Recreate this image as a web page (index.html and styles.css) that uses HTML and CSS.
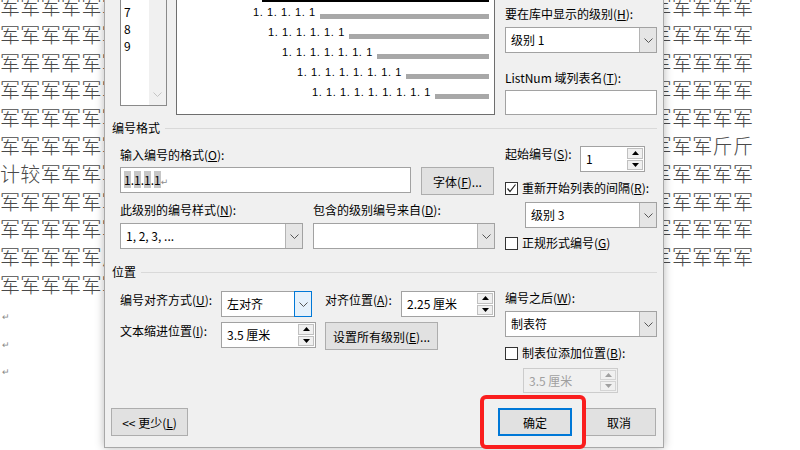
FILE: index.html
```html
<!DOCTYPE html>
<html lang="zh-CN">
<head>
    <meta charset="UTF-8">
    <title>定义新多级列表</title>
    <link rel="stylesheet" href="styles.css">
</head>
<body>
<div class="page">

    <div class="doc">
        <p>军军军军军军军军军军军军军军军军军军军军军军军军军军军军军军军军军军军军军</p>
        <p>军军军军军军军军军军军军军军军军军军军军军军军军军军军军军军军军军军军军军</p>
        <p>军军军军军军军军军军军军军军军军军军军军军军军军军军军军军军军军军军军军军</p>
        <p>军军军军军军军军军军军军军军军军军军军军军军军军军军军军军军军军军军军军军</p>
        <p>军军军军军军军军军军军军军军军军军军军军军军军军军军军军军军军军军军军军军</p>
        <p>军军军军军军军军军军军军军军军军军军军军军军军军军军军军军军军军军军军斤斤</p>
        <p>计较军军军军军军军军军军军军军军军军军军军军军军军军军军军军军军军军军军军</p>
        <p>军军军军军军军军军军军军军军军军军军军军军军军军军军军军军军军军军军军军军</p>
        <p>军军军军军军军军军军军军军军军军军军军军军军军军军军军军军军军军军军军军军</p>
        <p>军军军军军斤军军军军军军军军军军军军军军军军军军军军军军军军军军军军军军军</p>
        <p>军军军军军军军军军军军军军军军军军军军军军军军军军军军军军军军军</p>
        <p class="mark">↵</p>
        <p class="mark">↵</p>
        <p class="mark">↵</p>
    </div>

    <div class="dialog">
        <div class="top">
            <div class="levels">
                <div class="level-items">
                    <div>7</div>
                    <div>8</div>
                    <div>9</div>
                </div>
                <div class="scroll">
                    <svg width="9" height="5" viewBox="0 0 9 5"><polyline points="0.5,0.5 4.5,4.5 8.5,0.5" fill="none" stroke="#c4c4c4"/></svg>
                </div>
            </div>
            <div class="preview">
                <div class="sel-bar"></div>
                <div class="pv-row l5"><span>1. 1. 1. 1. 1</span><i></i></div>
                <div class="pv-row l6"><span>1. 1. 1. 1. 1. 1</span><i></i></div>
                <div class="pv-row l7"><span>1. 1. 1. 1. 1. 1. 1</span><i></i></div>
                <div class="pv-row l8"><span>1. 1. 1. 1. 1. 1. 1. 1</span><i></i></div>
                <div class="pv-row l9"><span>1. 1. 1. 1. 1. 1. 1. 1. 1</span><i></i></div>
            </div>
            <div class="side">
                <div class="lbl">要在库中显示的级别(<u>H</u>):</div>
                <div class="combo side-combo">
                    <span class="val">级别 1</span>
                    <b class="drop"><svg width="9" height="5" viewBox="0 0 9 5"><polyline points="0.5,0.5 4.5,4.5 8.5,0.5" fill="none" stroke="#555"/></svg></b>
                </div>
                <div class="lbl listnum">ListNum 域列表名(<u>T</u>):</div>
                <div class="field listnum-field"></div>
            </div>
        </div>

        <div class="group-title"><span>编号格式</span><i></i></div>

        <div class="fmt">
            <div class="fmt-left">
                <div class="lbl first">输入编号的格式(<u>O</u>):</div>
                <div class="fmt-row">
                    <div class="field fmt-input">
                        <span class="fld">1</span>.<span class="fld">1</span>.<span class="fld">1</span>.<span class="fld">1</span><span class="para">↵</span>
                    </div>
                    <div class="btn font-btn">字体(<u>F</u>)...</div>
                </div>
                <div class="pair">
                    <div class="lbl">此级别的编号样式(<u>N</u>):</div>
                    <div class="lbl">包含的级别编号来自(<u>D</u>):</div>
                    <div class="combo">
                        <span class="val">1, 2, 3, ...</span>
                        <b class="drop"><svg width="9" height="5" viewBox="0 0 9 5"><polyline points="0.5,0.5 4.5,4.5 8.5,0.5" fill="none" stroke="#555"/></svg></b>
                    </div>
                    <div class="combo">
                        <span class="val"></span>
                        <b class="drop"><svg width="9" height="5" viewBox="0 0 9 5"><polyline points="0.5,0.5 4.5,4.5 8.5,0.5" fill="none" stroke="#555"/></svg></b>
                    </div>
                </div>
            </div>

            <div class="fmt-right">
                <div class="start-row">
                    <div class="lbl start-lbl">起始编号(<u>S</u>):</div>
                    <div class="spin start-spin">
                        <span class="val">1</span>
                        <div class="spin-btns">
                            <b><svg width="7" height="4" viewBox="0 0 7 4"><polygon points="3.5,0 7,4 0,4" fill="#000"/></svg></b>
                            <b><svg width="7" height="4" viewBox="0 0 7 4"><polygon points="0,0 7,0 3.5,4" fill="#000"/></svg></b>
                        </div>
                    </div>
                </div>
                <div class="check-row restart">
                    <span class="box checked"><svg width="11" height="11" viewBox="0 0 11 11"><polyline points="1.5,5.5 4,8.5 9.5,1.5" fill="none" stroke="#222" stroke-width="1.2"/></svg></span>
                    <span>重新开始列表的间隔(<u>R</u>):</span>
                </div>
                <div class="combo restart-combo">
                    <span class="val">级别 3</span>
                    <b class="drop"><svg width="9" height="5" viewBox="0 0 9 5"><polyline points="0.5,0.5 4.5,4.5 8.5,0.5" fill="none" stroke="#555"/></svg></b>
                </div>
                <div class="check-row legal">
                    <span class="box"></span>
                    <span>正规形式编号(<u>G</u>)</span>
                </div>
            </div>
        </div>

        <div class="group-title pos-title"><span>位置</span><i></i></div>

        <div class="pos">
            <div class="pos-left">
                <div class="pos-row">
                    <div class="lbl pos-lbl">编号对齐方式(<u>U</u>):</div>
                    <div class="combo align-combo">
                        <span class="val">左对齐</span>
                        <b class="drop focus"><svg width="9" height="5" viewBox="0 0 9 5"><polyline points="0.5,0.5 4.5,4.5 8.5,0.5" fill="none" stroke="#555"/></svg></b>
                    </div>
                    <div class="lbl at-lbl">对齐位置(<u>A</u>):</div>
                    <div class="spin at-spin">
                        <span class="val">2.25 厘米</span>
                        <div class="spin-btns">
                            <b><svg width="7" height="4" viewBox="0 0 7 4"><polygon points="3.5,0 7,4 0,4" fill="#000"/></svg></b>
                            <b><svg width="7" height="4" viewBox="0 0 7 4"><polygon points="0,0 7,0 3.5,4" fill="#000"/></svg></b>
                        </div>
                    </div>
                </div>
                <div class="pos-row second">
                    <div class="lbl pos-lbl">文本缩进位置(<u>I</u>):</div>
                    <div class="spin indent-spin">
                        <span class="val">3.5 厘米</span>
                        <div class="spin-btns">
                            <b><svg width="7" height="4" viewBox="0 0 7 4"><polygon points="3.5,0 7,4 0,4" fill="#000"/></svg></b>
                            <b><svg width="7" height="4" viewBox="0 0 7 4"><polygon points="0,0 7,0 3.5,4" fill="#000"/></svg></b>
                        </div>
                    </div>
                    <div class="btn all-btn">设置所有级别(<u>E</u>)...</div>
                </div>
            </div>

            <div class="pos-right">
                <div class="lbl after-lbl">编号之后(<u>W</u>):</div>
                <div class="combo after-combo">
                    <span class="val">制表符</span>
                    <b class="drop"><svg width="9" height="5" viewBox="0 0 9 5"><polyline points="0.5,0.5 4.5,4.5 8.5,0.5" fill="none" stroke="#555"/></svg></b>
                </div>
                <div class="check-row tab-check">
                    <span class="box"></span>
                    <span>制表位添加位置(<u>B</u>):</span>
                </div>
                <div class="spin disabled tab-spin">
                    <span class="val">3.5 厘米</span>
                    <div class="spin-btns">
                        <b><svg width="7" height="4" viewBox="0 0 7 4"><polygon points="3.5,0 7,4 0,4" fill="#a0a0a0"/></svg></b>
                        <b><svg width="7" height="4" viewBox="0 0 7 4"><polygon points="0,0 7,0 3.5,4" fill="#a0a0a0"/></svg></b>
                    </div>
                </div>
            </div>
        </div>

        <div class="actions">
            <div class="btn less-btn">&lt;&lt; 更少(<u>L</u>)</div>
            <div class="btn ok-btn">确定</div>
            <div class="btn cancel-btn">取消</div>
        </div>
    </div>

    <div class="highlight"></div>
</div>
</body>
</html>
```

FILE: styles.css
```css
*{
    box-sizing: border-box;
}
html, body{
    width: 800px;
    height: 450px;
    margin: 0;
    padding: 0;
    overflow: hidden;
    background: #fff;
}
body{
    font-family: "Noto Sans CJK SC", "Microsoft YaHei", sans-serif;
    font-size: 12px;
    color: #000;
}
u{
    text-underline-offset: 1px;
}

.page{
    position: relative;
    width: 800px;
    height: 450px;
    overflow: hidden;
}

/* the document behind the dialog */
.doc{
    margin-top: -7px;
    font-size: 20px;
    font-weight: 300;
    line-height: 27.8px;
    letter-spacing: 0.36px;
    color: #4a4a4a;
    white-space: nowrap;
}
.doc p{
    margin: 0;
    height: 27.8px;
}
.doc .mark{
    font-family: "DejaVu Sans", sans-serif;
    font-size: 9px;
    color: #888;
    padding: 5px 0 0 2px;
}

/* dialog */
.dialog{
    position: absolute;
    left: 104px;
    top: 0;
    width: 560px;
    height: 448px;
    background: #f0f0f0;
    border: 1px solid #a8a8a8;
    border-top: none;
    box-shadow: 0 0 9px rgba(0, 0, 0, .28);
    padding: 0 6px 11px 15px;
    display: flex;
    flex-direction: column;
}

.lbl{
    line-height: 18px;
    white-space: nowrap;
}

.field{
    background: #fff;
    border: 1px solid #a2a2a2;
}

.combo{
    display: flex;
    height: 26px;
    background: #fff;
    border: 1px solid #a2a2a2;
}
.combo .val, .spin .val{
    flex: 1;
    padding-left: 5px;
    line-height: 24px;
    white-space: nowrap;
    overflow: hidden;
}
.drop{
    width: 17px;
    background: #e5e5e5;
    border-left: 1px solid #b4b4b4;
    display: flex;
    align-items: center;
    justify-content: center;
}
.drop.focus{
    background: #e5f1fb;
    border: 1px solid #0078d7;
    margin: -1px -1px -1px 0;
    width: 18px;
}

.spin{
    display: flex;
    height: 26px;
    background: #fff;
    border: 1px solid #a2a2a2;
}
.spin-btns{
    width: 17px;
    padding: 1px 1px 1px 0;
    display: flex;
    flex-direction: column;
    gap: 1px;
}
.spin-btns b{
    flex: 1;
    background: #f0f0f0;
    border: 1px solid #c0c0c0;
    display: flex;
    align-items: center;
    justify-content: center;
}
.spin.disabled{
    background: #f0f0f0;
    border-color: #cccccc;
    color: #a0a0a0;
}
.spin.disabled .spin-btns b{
    border-color: #d4d4d4;
}

.btn{
    height: 28px;
    background: #e1e1e1;
    border: 1px solid #adadad;
    display: flex;
    align-items: center;
    justify-content: center;
    white-space: nowrap;
}

.box{
    width: 13px;
    height: 13px;
    border: 1px solid #333;
    background: #fff;
    display: flex;
    align-items: center;
    justify-content: center;
}

.check-row{
    display: flex;
    align-items: center;
    gap: 4px;
    line-height: 18px;
    white-space: nowrap;
}

/* top part: level list, preview and library options */
.top{
    display: flex;
    height: 116px;
}
.levels{
    width: 47px;
    height: 106px;
    margin-right: 9px;
    display: flex;
    background: #fff;
    border: 1px solid #8a8a8a;
    border-top: none;
}
.level-items{
    flex: 1;
    padding: 3px 0 0 3px;
    line-height: 17px;
}
.scroll{
    width: 17px;
    background: #f0f0f0;
    display: flex;
    align-items: flex-end;
    justify-content: center;
    padding-bottom: 8px;
}

.preview{
    width: 319px;
    height: 115px;
    margin-right: 10px;
    background: #fff;
    border: 1px solid #6e6e6e;
    border-top: none;
    padding: 0 5px 0 0;
}
.sel-bar{
    height: 2px;
    margin-left: 85px;
    background: #000;
}
.pv-row{
    height: 20px;
    display: flex;
    align-items: center;
}
.pv-row:first-of-type{
    margin-top: 2px;
}
.pv-row span{
    font-family: "Liberation Sans", Arial, sans-serif;
    font-size: 11px;
    letter-spacing: 0.6px;
    white-space: nowrap;
}
.pv-row i{
    flex: 1;
    height: 5px;
    margin: 9px 0 0 4px;
    background: #a8a8a8;
}
.l5{ padding-left: 76px; }
.l6{ padding-left: 91px; }
.l7{ padding-left: 105px; }
.l8{ padding-left: 120px; }
.l9{ padding-left: 135px; }

.side{
    width: 152px;
    padding-top: 5px;
}
.side-combo{
    margin-top: 4px;
}
.listnum{
    margin-top: 16px;
}
.listnum-field{
    margin-top: 3px;
    height: 25px;
}

/* group titles */
.group-title{
    display: flex;
    align-items: center;
    margin: 3px 0 0 -8px;
    line-height: 18px;
}
.group-title i{
    flex: 1;
    height: 1px;
    margin-left: 5px;
    background: #d9d9d9;
}
.pos-title{
    margin-top: 11px;
}

/* number format */
.fmt{
    display: grid;
    grid-template-columns: 374px 152px;
    column-gap: 11px;
}
.fmt-left .first{
    margin-top: 9px;
}
.fmt-row{
    display: flex;
    gap: 10px;
    margin-top: 3px;
}
.fmt-input{
    width: 291px;
    height: 26px;
    padding-left: 3px;
    line-height: 24px;
}
.fld{
    background: #c6c6c6;
}
.para{
    font-family: "DejaVu Sans", sans-serif;
    font-size: 9px;
    color: #8a8a8a;
}
.font-btn{
    width: 73px;
}
.pair{
    display: grid;
    grid-template-columns: 183px 182px;
    column-gap: 10px;
    margin-top: 6px;
}
.pair .combo{
    margin-top: 4px;
}

.start-row{
    display: flex;
    margin-top: 8px;
}
.start-lbl{
    width: 75px;
}
.start-spin{
    width: 65px;
    margin-top: 1px;
}
.restart{
    margin-top: 7px;
}
.restart-combo{
    margin: 5px 0 0 20px;
}
.legal{
    margin-top: 6px;
}

/* position */
.pos{
    display: grid;
    grid-template-columns: 375px 152px;
    column-gap: 10px;
}
.pos-row{
    display: flex;
    margin-top: 10px;
}
.pos-row.second{
    margin-top: 5px;
}
.pos-lbl{
    width: 101px;
}
.align-combo{
    width: 91px;
}
.at-lbl{
    width: 76px;
    margin-left: 13px;
}
.at-spin{
    width: 94px;
}
.indent-spin{
    width: 95px;
}
.all-btn{
    width: 113px;
    margin-left: 9px;
}

.after-lbl{
    margin-top: 8px;
}
.after-combo{
    margin-top: 4px;
}
.tab-check{
    margin-top: 7px;
}
.tab-spin{
    width: 95px;
    height: 25px;
    margin: 6px 0 0 18px;
}

/* bottom buttons */
.actions{
    display: flex;
    margin: auto 1px 0 -9px;
}
.less-btn{
    width: 77px;
}
.ok-btn{
    width: 74px;
    margin-left: auto;
    border: 2px solid #0078d7;
}
.cancel-btn{
    width: 74px;
    margin-left: 10px;
}

.highlight{
    position: absolute;
    left: 480px;
    top: 395px;
    width: 106px;
    height: 54px;
    border: 4px solid #fa1e1e;
    border-radius: 6px;
}
```
